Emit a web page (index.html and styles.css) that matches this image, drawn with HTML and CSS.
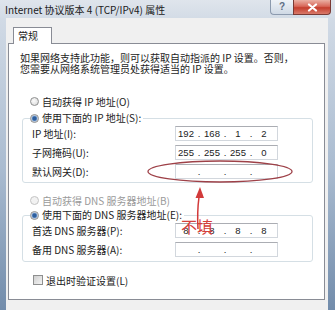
FILE: index.html
```html
<!DOCTYPE html>
<html lang="zh-CN">
<head>
    <meta charset="UTF-8">
    <title>Internet 协议版本 4 (TCP/IPv4) 属性</title>
    <link rel="stylesheet" href="styles.css">
</head>
<body>
    <div class="window">
        <div class="titlebar">
            <span class="title">Internet 协议版本 4 (TCP/IPv4) 属性</span>
            <div class="caption-btns">
                <span class="btn-help">?</span>
                <span class="btn-close">
                    <svg width="11" height="9" viewBox="0 0 11 9"><path d="M2 1.5 L9 7.5 M9 1.5 L2 7.5" stroke="#fff" stroke-width="2.2" stroke-linecap="round"/></svg>
                </span>
            </div>
        </div>
        <div class="frame">
            <div class="client">
                <div class="tabs"><span class="tab">常规</span></div>
                <div class="panel">
                    <p class="desc">如果网络支持此功能，则可以获取自动指派的 IP 设置。否则，<br>您需要从网络系统管理员处获得适当的 IP 设置。</p>

                    <div class="opt opt-ip-auto"><span class="radio"></span>自动获得 IP 地址(O)</div>
                    <fieldset class="group group-ip">
                        <legend><span class="radio checked"></span>使用下面的 IP 地址(S):</legend>
                        <div class="row">
                            <span class="label">IP 地址(I):</span>
                            <span class="ip"><span>192</span><span>.</span><span>168</span><span>.</span><span>1</span><span>.</span><span>2</span></span>
                        </div>
                        <div class="row">
                            <span class="label">子网掩码(U):</span>
                            <span class="ip"><span>255</span><span>.</span><span>255</span><span>.</span><span>255</span><span>.</span><span>0</span></span>
                        </div>
                        <div class="row">
                            <span class="label">默认网关(D):</span>
                            <span class="ip"><span></span><span>.</span><span></span><span>.</span><span></span><span>.</span><span></span></span>
                        </div>
                    </fieldset>

                    <div class="opt opt-dns-auto disabled"><span class="radio"></span>自动获得 DNS 服务器地址(B)</div>
                    <fieldset class="group group-dns">
                        <legend><span class="radio checked"></span>使用下面的 DNS 服务器地址(E):</legend>
                        <div class="row">
                            <span class="label">首选 DNS 服务器(P):</span>
                            <span class="ip"><span>8</span><span>.</span><span>8</span><span>.</span><span>8</span><span>.</span><span>8</span></span>
                        </div>
                        <div class="row">
                            <span class="label">备用 DNS 服务器(A):</span>
                            <span class="ip"><span></span><span>.</span><span></span><span>.</span><span></span><span>.</span><span></span></span>
                        </div>
                    </fieldset>

                    <div class="opt opt-check"><span class="checkbox"></span>退出时验证设置(L)</div>
                </div>
            </div>
        </div>

        <!-- hand-drawn note on top of the screenshot -->
        <svg class="annot" width="335" height="310" viewBox="0 0 335 310">
            <ellipse cx="220" cy="171.5" rx="72" ry="10.5" fill="none" stroke="#9e4148" stroke-width="1.3"/>
            <path d="M199 197 Q197 212 198 229" fill="none" stroke="#d23a3a" stroke-width="1.5"/>
            <polygon points="200,187 195.5,198 204,198" fill="#d23a3a"/>
        </svg>
        <span class="note">不填</span>
    </div>
</body>
</html>
```

FILE: styles.css
```css
body {
    margin: 0;
    font-family: "Noto Sans CJK SC", "Noto Sans", sans-serif;
    font-size: 10px;
    color: #1c1c1c;
}
.window {
    position: relative;
    width: 335px;
    height: 310px;
    display: flex;
    flex-direction: column;
    background: linear-gradient(#d6dee8, #a9bbd0 55%, #728cab);
    overflow: hidden;
}
.titlebar {
    height: 18px;
    display: flex;
    align-items: flex-start;
    background: linear-gradient(#dfe5ec, #d3dce6);
}
.title {
    padding-left: 5px;
    line-height: 19px;
    font-size: 10px;
    color: #202020;
}
.caption-btns {
    margin-left: auto;
    margin-right: 4px;
    display: flex;
}
.btn-help {
    width: 23px;
    height: 15px;
    box-sizing: border-box;
    border: 1px solid #8c9aae;
    border-top: none;
    border-right: none;
    border-radius: 0 0 0 4px;
    background: linear-gradient(#eef2f7, #cfd9e5);
    color: #5d6d84;
    font-family: "Liberation Sans", sans-serif;
    font-weight: bold;
    font-size: 10px;
    line-height: 14px;
    text-align: center;
}
.btn-close {
    width: 38px;
    height: 15px;
    box-sizing: border-box;
    border: 1px solid #7a3a34;
    border-top: none;
    border-radius: 0 0 4px 0;
    background: linear-gradient(#eab0a4, #d8685a 45%, #c43e2e 55%, #d97a6a);
    display: flex;
    align-items: center;
    justify-content: center;
}
.frame {
    flex: 1;
    display: flex;
    padding: 0 7px 0 6px;
}
.client {
    flex: 1;
    background: #f0f0f0;
    padding: 9px 3px 10px 2px;
    display: flex;
    flex-direction: column;
}
.tabs {
    display: flex;
    padding-left: 5px;
}
.tab {
    position: relative;
    z-index: 1;
    width: 39px;
    height: 17px;
    box-sizing: border-box;
    margin-bottom: -1px;
    border: 1px solid #898c95;
    border-bottom: none;
    background: #fff;
    padding-left: 4px;
    line-height: 16px;
}
.panel {
    height: 257px;
    box-sizing: border-box;
    border: 1px solid #898c95;
    background: #fff;
    padding: 8px 11px 0 11px;
}
.desc {
    margin: 0;
    line-height: 11px;
}
.opt {
    display: flex;
    align-items: center;
    height: 12px;
    padding-left: 10px;
}
.opt-ip-auto {
    margin-top: 21px;
}
.opt-dns-auto {
    margin-top: 11px;
}
.opt-check {
    margin-top: 12px;
    padding-left: 13px;
}
.disabled {
    color: #9a9a9a;
}
.radio {
    display: inline-block;
    width: 9px;
    height: 9px;
    box-sizing: border-box;
    border: 1px solid #8e8f8f;
    border-radius: 50%;
    background: radial-gradient(circle at 40% 40%, #fbfbfb, #d6d6d6);
    margin-right: 3px;
}
.radio.checked {
    background: radial-gradient(circle, #2d5f9e 0 1.6px, #7ea3d3 2.6px, #e6e6e6 3.4px);
}
.disabled .radio {
    border-color: #c4c4c4;
    background: #f2f2f2;
}
.checkbox {
    display: inline-block;
    width: 10px;
    height: 10px;
    box-sizing: border-box;
    border: 1px solid #8e8f8f;
    background: linear-gradient(135deg, #cfcfcf, #f4f4f4);
    margin-right: 3px;
}
.group {
    margin: 5px 0 0 2px;
    padding: 0 4px 1px 7px;
    border: 1px solid #d5dfe5;
    border-radius: 3px;
}
.group-dns {
    margin-top: 3px;
    padding-bottom: 2px;
}
.group legend {
    padding: 0 2px 0 0;
    line-height: 12px;
    height: 12px;
}
.group legend .radio {
    vertical-align: -1px;
}
.row {
    display: flex;
    align-items: center;
    height: 19px;
}
.label {
    width: 143px;
    padding-left: 2px;
}
.ip {
    width: 103px;
    height: 15px;
    box-sizing: border-box;
    border: 1px solid #d2d7dd;
    border-top-color: #abadb3;
    background: #fff;
    display: grid;
    grid-template-columns: 20px 6px 20px 6px 20px 6px 20px;
    font-family: "Liberation Sans", sans-serif;
    font-size: 9.5px;
    line-height: 13px;
    text-align: center;
    color: #222;
}
.annot {
    position: absolute;
    top: 0;
    left: 0;
    pointer-events: none;
}
.note {
    position: absolute;
    left: 181px;
    top: 217px;
    font-size: 16px;
    line-height: 18px;
    color: #d4403a;
}
```
